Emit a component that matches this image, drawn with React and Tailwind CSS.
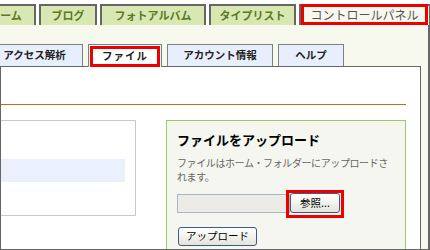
import React from "react";

const FONT = { fontFamily: '"Noto Sans CJK JP", "Noto Sans", sans-serif' };

function TopTab({ w, children }) {
  return (
    <div
      className={`${w} shrink-0 h-full border-2 border-b-0 border-[#666] bg-[#d9e8b2] flex items-center justify-center text-[11px] font-bold text-[#5a7a26] leading-none`}
    >
      {children}
    </div>
  );
}

function SubTab({ w, children }) {
  return (
    <div
      className={`${w} shrink-0 h-full border border-b-0 border-[#808080] bg-[#e8effc] flex items-center justify-center text-[10.5px] font-bold text-[#222] leading-none`}
    >
      {children}
    </div>
  );
}

export default function App() {
  return (
    <div className="w-[430px] h-[250px] bg-white overflow-hidden flex flex-col" style={FONT}>
      {/* top tabs */}
      <div className="h-[25px] pt-[4px] flex gap-[3px] ml-[-25px] shrink-0">
        <TopTab w="w-[61px]">ホーム</TopTab>
        <TopTab w="w-[58px]">ブログ</TopTab>
        <TopTab w="w-[106px]">フォトアルバム</TopTab>
        <TopTab w="w-[87px]">タイプリスト</TopTab>
        <div className="w-[132px] shrink-0 h-full border-2 border-b-0 border-[#666] bg-[#f7f9ef] flex">
          <div className="flex-1 mr-[1px] mt-[-2px] border-[3px] border-[#ee0000] flex items-center justify-center text-[12px] text-[#555] leading-none">
            コントロールパネル
          </div>
        </div>
      </div>

      {/* light area */}
      <div className="flex-1 bg-[#f7f9ef] border-r-2 border-b border-[#666] pt-[19px] flex flex-col">
        {/* sub tabs */}
        <div className="h-[22px] flex gap-[5px] ml-[-14px] shrink-0 relative z-10">
          <SubTab w="w-[97px]">アクセス解析</SubTab>
          <div className="w-[74px] shrink-0 h-[23px] border border-b-0 border-[#808080] bg-white p-[1px] pb-0">
            <div className="h-full border-[3px] border-[#ee0000] flex items-center justify-center text-[10.5px] font-bold text-[#222] tracking-[1px] leading-none">
              ファイル
            </div>
          </div>
          <SubTab w="w-[106px]">アカウント情報</SubTab>
          <SubTab w="w-[66px]">ヘルプ</SubTab>
        </div>

        {/* panel */}
        <div className="w-[421px] flex-1 bg-white border-l border-r border-t border-[#666] overflow-hidden pr-[14px] flex flex-col">
          <div className="h-[37px] shrink-0" />
          <div className="h-px bg-[#cc6a10] shrink-0" />
          <div className="flex-1 flex gap-[30px] pt-[15px] ml-[-20px]">
            {/* left box */}
            <div className="w-[155px] h-[96px] shrink-0 border border-[#c8c8c8] bg-white pt-[38px] pr-[10px]">
              <div className="h-[23px] bg-[#eaf0fc]" />
            </div>
            {/* right box */}
            <div className="flex-1 border border-b-0 border-[#99cc66] bg-[#f4f6ef] pl-[10px] pt-[10px]">
              <div className="text-[13px] leading-[18px] font-bold text-black">ファイルをアップロード</div>
              <div className="mt-[7px] text-[10px] leading-[14px] text-[#666] tracking-[-0.4px]">
                <div>ファイルはホーム・フォルダーにアップロードさ</div>
                <div>れます。</div>
              </div>
              <div className="mt-[9px] flex items-start">
                <div className="w-[113px] h-[19px] mt-[1px] border border-[#a9b6c8] bg-[#ecebe5]" />
                <div className="relative z-10 ml-[-4px] mt-[-3px] border-[3px] border-[#ee0000] px-px pb-[2px]">
                  <button className="block w-[50px] h-[20px] rounded-[3px] border border-[#3b5b82] bg-gradient-to-b from-white to-[#e4e4dc] text-[10.5px] text-black leading-none">
                    参照...
                  </button>
                </div>
              </div>
              <button className="block mt-[9px] ml-[1px] w-[79px] h-[19px] rounded-[3px] border border-[#3b5b82] bg-gradient-to-b from-white to-[#e4e4dc] text-[10.5px] text-black leading-none">
                アップロード
              </button>
            </div>
          </div>
        </div>
      </div>
    </div>
  );
}
